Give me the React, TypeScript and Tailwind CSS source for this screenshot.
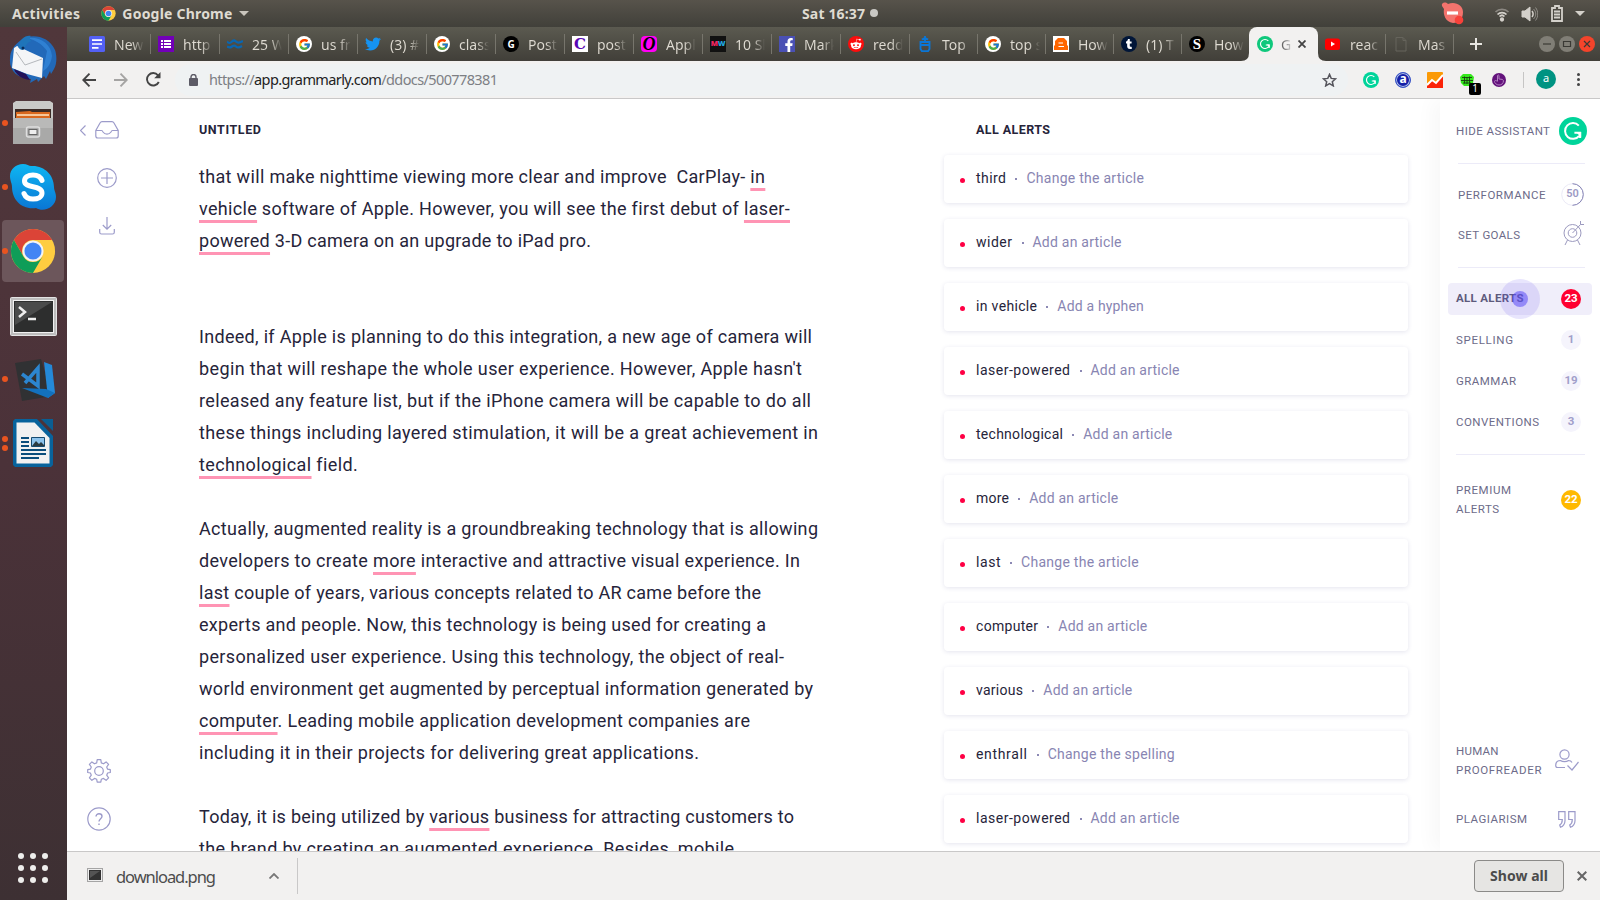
import { useLayoutEffect, useRef, type ReactNode } from "react";
import { FaTwitter, FaRedditAlien, FaFacebookF, FaTumblr } from "react-icons/fa";
import { FcGoogle } from "react-icons/fc";

/* Tracks its text out (or in) so that it fills the given width. */
function Fit({ w, className = "", children }: { w: number; className?: string; children: ReactNode }) {
  const ref = useRef<HTMLSpanElement>(null);
  useLayoutEffect(() => {
    const el = ref.current;
    if (!el) return;
    el.style.letterSpacing = "0px";
    const n = (el.textContent ?? "").length;
    el.style.letterSpacing = `${(w - el.getBoundingClientRect().width) / Math.max(1, n - 1)}px`;
  }, [w]);
  return (
    <span ref={ref} className={`inline-block shrink-0 whitespace-pre ${className}`}>
      {children}
    </span>
  );
}

function GrammarlyLogo({ size, color = "#00d49a" }: { size: number; color?: string }) {
  return (
    <svg width={size} height={size} viewBox="0 0 28 28" className="shrink-0">
      <circle cx="14" cy="14" r="14" fill={color} />
      <path d="M19.800 8.600A7.900 7.900 0 1 0 20.200 18.800M15.400 15.700h5.700v5.400" fill="none" stroke="#fff" strokeWidth="2" />
      <path d="M17 15h5.200v5.600z" fill="#fff" />
    </svg>
  );
}

function ChromeLogo({ size }: { size: number }) {
  return (
    <svg width={size} height={size} viewBox="0 0 48 48" className="shrink-0">
      <circle cx="24" cy="24" r="23" fill="#ffcd40" />
      <path d="M4.100 12.500A23 23 0 0 1 43.900 12.500H24A11.500 11.500 0 0 0 14 29.700z" fill="#db4437" />
      <path d="M4.100 12.500A23 23 0 0 0 24 47L34 29.700A11.500 11.500 0 0 1 14 29.700z" fill="#0f9d58" />
      <circle cx="24" cy="24" r="11" fill="#f4f4f4" />
      <circle cx="24" cy="24" r="8.900" fill="#4285f4" />
    </svg>
  );
}

const disc = "flex size-4 shrink-0 items-center justify-center overflow-hidden rounded-full";
const sq = "flex size-4 shrink-0 items-center justify-center";

const google = (
  <span className={`${disc} bg-white`}>
    <FcGoogle size={13} />
  </span>
);

const tabs: { t: string; icon: ReactNode; narrow?: boolean }[] = [
  {
    t: "New",
    icon: (
      <svg width="16" height="16" viewBox="0 0 16 16"><rect width="16" height="16" rx="1.500" fill="#5360f5" /><path d="M3 4.200h10M3 8h10M3 11.800h6.500" stroke="#fff" strokeWidth="1.700" /></svg>
    ),
  },
  {
    t: "http",
    icon: (
      <svg width="16" height="16" viewBox="0 0 16 16"><rect width="16" height="16" fill="#7200b8" /><path d="M6 5h7M6 8h7M6 11h7M3 5h2M3 8h2M3 11h2" stroke="#fff" strokeWidth="1.800" /></svg>
    ),
  },
  {
    t: "25 W",
    icon: (
      <svg width="16" height="16" viewBox="0 0 16 16" fill="none" stroke="#0a66b0" strokeWidth="2.200"><path d="M0 5.500c2 2 3 2 5 0s3-1 4 0 3 2 7-.5M0 10.500c2 1.500 3 1.500 5 0s3-1 4 0 3 1.500 6-.5" /></svg>
    ),
  },
  { t: "us fr", icon: google },
  { t: "(3) #", icon: <FaTwitter size={16} color="#1593f2" /> },
  { t: "class", icon: google },
  { t: "Post", icon: <span className={`${disc} bg-black text-[10px] font-bold text-white`}>G</span> },
  { t: "post", icon: <span className={`${sq} bg-white font-['DejaVu_Serif'] text-[15px] leading-none font-bold text-[#5a06b5]`}>C</span> },
  { t: "Appl", icon: <span className={`${sq} rounded-sm bg-[#ff00f5] font-['Liberation_Serif'] text-[18px] leading-none font-bold text-black italic`}>O</span> },
  { t: "10 Sl", icon: <span className={`${sq} bg-[#111] text-[7.500px] font-black tracking-tighter text-[#f0255f]`}>M<b className="text-[#21a7e0]">W</b></span> },
  { t: "Mark", icon: <span className={`${sq} items-end bg-[#4a50b4] pl-1`}><FaFacebookF size={14} color="#fff" /></span> },
  { t: "redd", icon: <span className={`${disc} bg-[#fb0d0d]`}><FaRedditAlien size={12} color="#fff" /></span> },
  {
    t: "Top",
    narrow: true,
    icon: (
      <svg width="16" height="16" viewBox="0 0 16 16" fill="none" stroke="#0b76d6" strokeWidth="1.900"><path d="M3.500 6h9v7l-1.500 2.200h-6L3.500 13zM3.500 9h9M8 6V0M4.800 3.500L8 2l3.200 1.500" /></svg>
    ),
  },
  { t: "top s", narrow: true, icon: google },
  {
    t: "How",
    narrow: true,
    icon: (
      <svg width="16" height="16" viewBox="0 0 16 16"><rect width="16" height="16" fill="#fff" /><path d="M2 5l3-3h6l3 3v4l1 1v4H1v-4l1-1z" fill="#f60" /><path d="M5.500 7h4.500M5.500 10.500h5.500" stroke="#fff" strokeWidth="1.200" /></svg>
    ),
  },
  { t: "(1) T", narrow: true, icon: <span className={`${disc} bg-[#011638]`}><FaTumblr size={10} color="#fff" /></span> },
  { t: "How", narrow: true, icon: <span className={`${disc} bg-black font-['Liberation_Serif'] text-[15px] leading-none font-bold text-white`}>S</span> },
];

function Tab({ t, icon, narrow, sep = true }: { t: string; icon: ReactNode; narrow?: boolean; sep?: boolean }) {
  return (
    <div className={`flex h-5 shrink-0 items-center pl-[7px] ${narrow ? "w-[68px]" : "w-[69px]"} ${sep ? "border-r border-[#77756c]" : ""}`}>
      <span className="flex w-4 shrink-0 justify-center">{icon}</span>
      <span className="ml-[9px] w-[30px] shrink-0 bg-linear-to-r from-[#dfdbd2] from-60% to-transparent bg-clip-text text-[14px] whitespace-nowrap text-transparent">{t}</span>
    </div>
  );
}

function TopBar() {
  return (
    <div className="flex h-[27px] shrink-0 items-center bg-linear-to-b from-[#57534b] to-[#41403a] text-[14px] font-bold text-[#dfdbd2]">
      <div className="flex w-[802px] items-center pl-3">
        <Fit w={68}>Activities</Fit>
        <span className="ml-[21px]"><ChromeLogo size={15} /></span>
        <Fit w={110} className="ml-[6px]">Google Chrome</Fit>
        <span className="ml-1.5 h-0 w-0 border-x-[5px] border-t-[5px] border-x-transparent border-t-[#c9c5bd]" />
      </div>
      <Fit w={63} className="-mt-px">Sat 16:37</Fit>
      <span className="-mt-px ml-[5px] size-2 rounded-full bg-[#c9c8c4]" />
      <svg className="mt-[-1px] ml-auto" width="24" height="24" viewBox="0 0 24 24">
        <path d="M1 5C0 2 4 0 7 3c7-3 15 1 15 8 0 7-4 11-10 11C4 21 2 13 3 8z" fill="#f3736d" />
        <path d="M6 12h11" stroke="#fff" strokeWidth="3.200" />
        <circle cx="18" cy="19" r="4.300" fill="#f8413a" />
      </svg>
      <svg className="ml-[29px]" width="16" height="16" viewBox="0 0 16 16" fill="none" stroke="#d4d1cb" strokeWidth="1.700">
        <path d="M1.500 6C5 2.500 11 2.500 14.500 6" opacity=".45" />
        <path d="M3.500 8.500C6 6 10 6 12.500 8.500M5.500 10.500C7 9 9 9 10.500 10.500" />
        <circle cx="8" cy="13.500" r="1.300" fill="#d4d1cb" />
      </svg>
      <svg className="ml-[11px]" width="17" height="16" viewBox="0 0 17 16" fill="none" stroke="#d4d1cb">
        <path d="M1 5h3l5-4v14l-5-4H1z" fill="#d4d1cb" />
        <path d="M11 5c1.500 2 1.500 4 0 6" strokeWidth="1.500" />
        <path d="M12.500 3c3 3 3 7 0 10M14.500 1.500c3 4 3 9 0 13" opacity=".5" />
      </svg>
      <svg className="ml-[13px]" width="12" height="17" viewBox="0 0 12 17" fill="none" stroke="#d4d1cb" strokeWidth="1.800">
        <path d="M1 3h3V1h4v2h3v13H1zM3 6.500h6M3 9.500h6M3 12.500h6" />
      </svg>
      <span className="mr-[15px] ml-[12px] h-0 w-0 border-x-[5px] border-t-[5px] border-x-transparent border-t-[#d4d1cb]" />
    </div>
  );
}

function Dots({ n }: { n: number }) {
  return (
    <span className="flex w-[10px] flex-col items-center gap-[3px]">
      {Array.from({ length: n }, (_, i) => <i key={i} className="size-1.5 rounded-full bg-[#e95420]" />)}
    </span>
  );
}

function Launcher({ n = 1, active = false, children }: { n?: number; active?: boolean; children: ReactNode }) {
  return (
    <div className={`mb-[2px] ml-[2px] flex h-[62px] w-[62px] shrink-0 items-center rounded-sm ${active ? "bg-[#6c565b]" : ""}`}>
      <span className="ml-[-2px]"><Dots n={n} /></span>
      <span className="-ml-px flex w-[48px] items-center justify-center">{children}</span>
    </div>
  );
}

function Dock() {
  return (
    <div className="flex w-[67px] shrink-0 flex-col bg-linear-to-b from-[#50373b] via-[#4b3239] to-[#3d3033] pt-[1px]">
      <Launcher n={0}>
        <svg width="48" height="48" viewBox="0 0 48 48">
          <path d="M12 5C22-2 40 1 46 15c2 6 2 14-1 19l-3 5-1-3-4 8-2-3-6 6-1-3-7 4 1-4C8 44 0 35 1 24c0-8 4-14 11-19z" fill="#2269b9" />
          <path d="M18 3c12-2 24 5 25 18-1 8-5 13-9 15l4-20C34 10 27 5 18 3z" fill="#2f80d3" />
          <path d="M5 13l3-2 26 12-1 20-15-4L3 33z" fill="#f4f5f7" />
          <path d="M9 12C11 4 16 0 22 1c-3 2 0 6 5 9-6-2-9-1-12 4-1 2-4 1-6-2z" fill="#1f75ba" />
          <path d="M24 6c8 2 13 8 12 18L30 19 20 16l-4-3c1-4 4-7 8-7z" fill="#2269b9" />
          <path d="M7 17l9 13 17-6" fill="none" stroke="#adb0b4" strokeWidth=".9" />
          <path d="M5 34l12 5 4 6C13 44 7 40 5 34z" fill="#241259" />
          <circle cx="14" cy="13" r="1.500" fill="#0b2c5a" />
        </svg>
      </Launcher>
      <Launcher>
        <svg width="44" height="46" viewBox="0 0 44 46">
          <path d="M2 3l3-2h34l3 2v38H2z" fill="#c9c9c7" />
          <path d="M4 9h36v10H4z" fill="#3b2b26" />
          <path d="M5 12l14-1 2 1h18v7H5z" fill="#d9681e" />
          <path d="M6 15h32" stroke="#ffe7c4" strokeWidth="1.500" />
          <path d="M2 18h40v26H2z" fill="#a9a9a8" />
          <path d="M2 18h40v10H2z" fill="#b9b9b8" />
          <rect x="15.500" y="27" width="13" height="10" rx="2" fill="#aaa" stroke="#dedede" strokeWidth="1.500" />
          <rect x="18" y="29.500" width="8" height="5" fill="#eee" stroke="#666" />
        </svg>
      </Launcher>
      <Launcher>
        <svg width="48" height="48" viewBox="0 0 48 48">
          <defs><linearGradient id="sk" x1="0" y1="0" x2="0" y2="1"><stop offset="0" stopColor="#0eb6f2" /><stop offset="1" stopColor="#0a76d4" /></linearGradient></defs>
          <path d="M14 1c4 0 6 2 8 2 13-1 23 9 23 21 0 4 2 5 2 10 0 10-12 16-20 11C13 47 3 37 3 24 3 20 1 18 1 13 1 6 7 1 14 1z" fill="url(#sk)" />
          <path d="M33 17.500c-1.500-4-5-5.500-9-5.500-5 0-8.500 2.300-8.500 6 0 8 17.500 3.500 17.500 12 0 4-4 6-9 6-4 0-7.500-1.500-9-5.500" fill="none" stroke="#fff" strokeWidth="5" strokeLinecap="round" />
        </svg>
      </Launcher>
      <Launcher active><ChromeLogo size={46} /></Launcher>
      <Launcher n={0}>
        <svg className="mt-[3px]" width="47" height="40" viewBox="0 0 47 40">
          <rect x=".5" y=".5" width="46" height="38" rx="1" fill="#bdbdbd" stroke="#e3e3e3" />
          <rect x="3.500" y="3.500" width="40" height="32" fill="#2d2e2e" stroke="#f1f1f1" />
          <path d="M5 5h37L5 28z" fill="#4a4b4b" />
          <path d="M9 10l6 5-6 5M18 22h8" fill="none" stroke="#eee" strokeWidth="2.500" />
        </svg>
      </Launcher>
      <Launcher>
        <svg width="44" height="44" viewBox="0 0 44 44" className="mt-px ml-[3px]">
          <path d="M2 5l26-4 11 37L9 43z" fill="#303133" />
          <path d="M31 4l8 3 3 28-7 5z" fill="#2489d8" />
          <path d="M9 30l24 1 9 4-7 5z" fill="#1371bd" />
          <path d="M9 16l16 12V10L12 25" fill="none" stroke="#2c86d0" strokeWidth="3.500" />
        </svg>
      </Launcher>
      <Launcher n={2}>
        <svg width="41" height="48" viewBox="0 0 41 48">
          <path d="M2 0h22l16 17v29l-2 2H2l-2-2V2z" fill="#08639c" />
          <path d="M3.500 3.500h18L36.500 19v25.500h-33z" fill="#f1f1f1" />
          <path d="M28 0h12v12z" fill="#0a5e92" />
          <path d="M8 19h8M8 23h8M8 27h8M8 31h25M8 35h25M8 39h18" stroke="#0a4d7b" strokeWidth="2" />
          <path d="M18.500 18.500h13v9h-13z" fill="#8dc3ec" stroke="#174b70" />
          <path d="M19 27l4-5 3 3 2-2 4 4z" fill="#2b3b41" />
        </svg>
      </Launcher>
      <div className="mt-auto mb-[17px] ml-[18px] grid w-[30px] grid-cols-3 gap-1.5">
        {Array.from({ length: 9 }, (_, i) => <i key={i} className="size-1.5 rounded-full bg-[#eeeeec]" />)}
      </div>
    </div>
  );
}

function WinButton({ close = false, children }: { close?: boolean; children: ReactNode }) {
  return (
    <span className={`flex size-4 items-center justify-center rounded-full ${close ? "bg-[#f4442b]" : "bg-[#807e76]"}`}>
      <svg width="16" height="16" viewBox="0 0 16 16" fill="none" stroke="#3a3934" strokeWidth="1.200">{children}</svg>
    </span>
  );
}

function TabStrip() {
  return (
    <div className="flex h-[34px] shrink-0 items-center bg-linear-to-b from-[#5b5a50] to-[#413f39] pl-[15px]">
      {tabs.map((tab, i) => <Tab key={i} {...tab} sep={i < tabs.length - 1} />)}
      <div className="relative -ml-px flex h-[34px] w-[69px] shrink-0 items-center rounded-t-lg bg-[#f2f1f0] pl-2">
        <svg className="absolute bottom-0 left-[-8px]" width="85" height="8" viewBox="0 0 85 8" fill="#f2f1f0"><path d="M0 8Q8 8 8 0V8zM85 8Q77 8 77 0V8z" /></svg>
        <GrammarlyLogo size={16} color="#0fc87c" />
        <span className="ml-2 w-[10px] bg-linear-to-r from-[#555] to-[#ccc] bg-clip-text text-[14px] text-transparent">G</span>
        <svg className="ml-[7px]" width="8" height="8" viewBox="0 0 8 8" stroke="#444" strokeWidth="1.800"><path d="M.5 .5l7 7M7.500 .5l-7 7" /></svg>
      </div>
      <Tab t="reac" narrow icon={<svg width="16" height="16" viewBox="0 0 16 16"><rect y="2.500" width="15" height="11.500" rx="2.500" fill="#f00" /><path d="M6 5.500v5l4-2.500z" fill="#fff" /></svg>} />
      <Tab t="Mas" narrow icon={<svg width="16" height="16" viewBox="0 0 16 16" fill="none" stroke="#66645c"><path d="M3 1.500h7l3 3V15H3zM10 1.500v3h3" /></svg>} />
      <svg className="ml-[16px]" width="12" height="12" viewBox="0 0 12 12" stroke="#e8e6e1" strokeWidth="2"><path d="M6 0v12M0 6h12" /></svg>
      <div className="mr-[5px] ml-auto flex gap-1">
        <WinButton><path d="M4 8h8" /></WinButton>
        <WinButton><path d="M4.500 5.500h7v5h-7z" /></WinButton>
        <WinButton close><path d="M5 5l6 6M11 5l-6 6" /></WinButton>
      </div>
    </div>
  );
}

function Toolbar() {
  return (
    <div className="flex h-[38px] shrink-0 items-center border-b border-[#c9c8c8] bg-[#f2f1f0] pl-[15px]">
      <svg width="14" height="14" viewBox="0 0 14 14" fill="none" stroke="#444" strokeWidth="1.900"><path d="M14 7H1.500M7.500 .7L1.300 7l6.200 6.300" /></svg>
      <svg className="ml-[18px]" width="14" height="14" viewBox="0 0 14 14" fill="none" stroke="#a5a4a3" strokeWidth="1.900"><path d="M0 7h12.500M6.500 .7L12.700 7l-6.200 6.300" /></svg>
      <svg className="ml-[18px]" width="15" height="15" viewBox="0 0 15 15" fill="none" stroke="#444" strokeWidth="1.900"><path d="M12.800 10A6.200 6.200 0 1 1 12 3.300l1.500 1.700" /><path d="M14.500 0v6.300H8.200z" fill="#444" stroke="none" /></svg>
      <div className="ml-[14px] flex h-8 w-[1173px] items-center rounded-full bg-[#eff2f3] pl-[14px] text-[14.500px]">
        <svg width="9" height="12" viewBox="0 0 9 12"><rect y="4" width="9" height="8" rx="1" fill="#5c5b66" /><path d="M2 5V3a2.500 2.500 0 0 1 5 0v2" fill="none" stroke="#5c5b66" strokeWidth="1.400" /></svg>
        <Fit w={289} className="ml-[11px] text-[#7d7f84]">
          https://<span className="text-[#222]">app.grammarly.com</span>/ddocs/500778381
        </Fit>
        <svg className="mr-[11px] ml-auto" width="15" height="14" viewBox="0 0 15 14" fill="none" stroke="#55555c" strokeWidth="1.500"><path d="M7.500 1.400l1.700 4 4.400.4-3.300 2.900 1 4.200-3.800-2.200-3.800 2.200 1-4.200L1.400 5.800l4.400-.4z" /></svg>
      </div>
      <span className="ml-[15px]"><GrammarlyLogo size={16} /></span>
      <span className="ml-4 flex size-4 items-center justify-center rounded-full border border-[#3b57c9] bg-[#1520a8] text-[12px] leading-none font-bold text-white ring-1 ring-[#b4c4e8] ring-inset"><span className="-mt-0.5">a</span></span>
      <svg className="ml-4" width="16" height="16" viewBox="0 0 16 16"><rect width="16" height="16" rx="1" fill="#fb9a06" /><path d="M0 14l5-6 4 3 7-8v13H0z" fill="#fb2308" /><path d="M0 13l5-5 4 3 7-8" fill="none" stroke="#fff" strokeWidth="2" /></svg>
      <span className="relative ml-[17px]">
        <svg width="14" height="14" viewBox="0 0 14 14"><path d="M3 1h8l3 3-1 6-3 3H4l-3-3-1-6z" fill="#35e81c" /><path d="M2 4.500h10M1 7.500h12M3 10h8M4.500 3.500v7M7 4v7M9.500 3.500v7" stroke="#173d11" strokeWidth=".9" /></svg>
        <span className="absolute top-[10px] left-[9px] flex size-3 items-center justify-center rounded-[2px] bg-black text-[10px] text-white">1</span>
      </span>
      <svg className="ml-[18px]" width="14" height="14" viewBox="0 0 14 14"><circle cx="7" cy="7" r="7" fill="#64137c" /><path d="M5.500 8V2.500q1-1 1.500 0V6q4 0 4.500 1.500c0 3-2 4.500-4.500 4.500s-4.500-2-4.500-3.500 2-1 3 0" fill="none" stroke="#b17fc0" /></svg>
      <span className="ml-[17px] h-4 w-px bg-[#c6c5c4]" />
      <span className="-mt-0.5 ml-[12px] flex size-5 items-center justify-center rounded-full bg-[#009382] text-[11px] text-white">a</span>
      <span className="ml-[21px] flex flex-col gap-0.5">{[0, 1, 2].map((i) => <i key={i} className="size-[3px] rounded-full bg-[#444]" />)}</span>
    </div>
  );
}

const U = ({ children }: { children: ReactNode }) => (
  <span className="underline decoration-[#ff94b4] decoration-[3px] underline-offset-[5px] [text-decoration-skip-ink:none]">{children}</span>
);

const lines: [number, ReactNode][] = [
  [566, <>that will make nighttime viewing more clear and improve{"  "}CarPlay- <U>in</U></>],
  [590, <><U>vehicle</U> software of Apple. However, you will see the first debut of <U>laser-</U></>],
  [392, <><U>powered</U> 3-D camera on an upgrade to iPad pro.</>],
  [0, null],
  [0, null],
  [613, "Indeed, if Apple is planning to do this integration, a new age of camera will"],
  [603, "begin that will reshape the whole user experience. However, Apple hasn't"],
  [612, "released any feature list, but if the iPhone camera will be capable to do all"],
  [619, "these things including layered stimulation, it will be a great achievement in"],
  [158, <><U>technological</U> field.</>],
  [0, null],
  [619, "Actually, augmented reality is a groundbreaking technology that is allowing"],
  [601, <>developers to create <U>more</U> interactive and attractive visual experience. In</>],
  [562, <><U>last</U> couple of years, various concepts related to AR came before the</>],
  [567, "experts and people. Now, this technology is being used for creating a"],
  [585, "personalized user experience. Using this technology, the object of real-"],
  [614, "world environment get augmented by perceptual information generated by"],
  [551, <><U>computer</U>. Leading mobile application development companies are</>],
  [500, "including it in their projects for delivering great applications."],
  [0, null],
  [595, <>Today, it is being utilized by <U>various</U> business for attracting customers to</>],
  [535, "the brand by creating an augmented experience. Besides, mobile"],
];

const alerts: [string, number, string, number][] = [
  ["third", 30, "Change the article", 117.5],
  ["wider", 36, "Add an article", 89],
  ["in vehicle", 61, "Add a hyphen", 86.5],
  ["laser-powered", 94, "Add an article", 89],
  ["technological", 87, "Add an article", 89],
  ["more", 33, "Add an article", 89],
  ["last", 24.5, "Change the article", 117.5],
  ["computer", 62, "Add an article", 89],
  ["various", 47, "Add an article", 89],
  ["enthrall", 51, "Change the spelling", 127],
  ["laser-powered", 94, "Add an article", 89],
];

function ToolRail() {
  return (
    <div className="flex w-[132px] shrink-0 flex-col text-[#9c9bca]">
      <div className="mt-[22px] ml-[13px] flex items-center gap-[9px]">
        <svg width="6" height="11" viewBox="0 0 6 11" fill="none" stroke="currentColor" strokeWidth="1.200"><path d="M5.500 .5l-5 5 5 5" /></svg>
        <svg width="24" height="18" viewBox="0 0 24 18" fill="none" stroke="currentColor" strokeWidth="1.200"><path d="M.8 9.500L5 2q.8-1.300 2-1.300h10q1.200 0 2 1.300l4.200 7.500v5.500q0 2-2 2H2.800q-2 0-2-2zM1 9.500h5.500q1 0 1.500 1.500 1.500 2.200 4 2.200t4-2.200q.5-1.500 1.500-1.500H23" /></svg>
      </div>
      <svg className="mt-[29px] ml-[30px]" width="20" height="20" viewBox="0 0 20 20" fill="none" stroke="currentColor" strokeWidth="1.200"><circle cx="10" cy="10" r="9.300" /><path d="M10 4v12M4 10h12" /></svg>
      <svg className="mt-[29px] ml-[32px]" width="16" height="18" viewBox="0 0 16 18" fill="none" stroke="currentColor" strokeWidth="1.200"><path d="M8 0v12M3.800 8L8 12.200 12.200 8M.7 12v3.200q0 1.800 1.800 1.800h11q1.800 0 1.800-1.800V12" /></svg>
      <svg className="mt-auto ml-[20px]" width="24" height="24" viewBox="0 0 24 24" fill="none" stroke="currentColor" strokeWidth="1.200">
        <path d="M10.200 .7h3.600l.5 3.200 2.200.9 2.600-1.900 2.500 2.500-1.900 2.600.9 2.200 2.700.5v2.800l-2.700.5-.9 2.200 1.900 2.600-2.500 2.500-2.600-1.900-2.200.9-.5 2.900h-3.600l-.5-2.900-2.200-.9-2.600 1.900-2.500-2.500 1.900-2.600-.9-2.200-2.700-.5v-2.800l2.700-.5.9-2.200-1.900-2.600 2.500-2.500 2.600 1.900 2.200-.9z" strokeLinejoin="round" /><circle cx="12" cy="12" r="4.300" />
      </svg>
      <svg className="mt-6 mb-[20px] ml-[20px]" width="24" height="24" viewBox="0 0 24 24" fill="none" stroke="currentColor" strokeWidth="1.200"><circle cx="12" cy="12" r="11.200" /><path d="M9 9.500C9 5.800 15 6 15 9.300c0 2.400-3 2.400-3 5.200M12 16.500v1.500" strokeWidth="1.400" /></svg>
    </div>
  );
}

function Editor() {
  return (
    <div className="w-[745px] shrink-0 text-[#26243a]">
      <Fit w={62} className="mt-[21px] h-[20px] text-[12.500px] leading-[20px] font-bold">UNTITLED</Fit>
      <div className="mt-[20px] text-[18px]">
        {lines.map(([w, text], i) => (
          <div key={i} className="h-8 leading-8">{w > 0 && <Fit w={w}>{text}</Fit>}</div>
        ))}
      </div>
    </div>
  );
}

function AlertList() {
  return (
    <div className="flex w-[464px] shrink-0 flex-col">
      <Fit w={74} className="mt-[21px] ml-8 h-[20px] self-start text-[12.500px] leading-[20px] font-bold text-[#26243a]">ALL ALERTS</Fit>
      <div className="mt-[15px] flex flex-col gap-4">
        {alerts.map(([word, ww, tip, tw], i) => (
          <div key={i} className="flex h-12 shrink-0 items-center rounded bg-white pl-4 text-[14px] shadow-[0_1px_4px_rgba(90,85,150,0.16)]">
            <i className="mt-[3px] mr-[11px] size-[5px] rounded-full bg-[#ff0044]" />
            <Fit w={ww} className="-mt-px text-[#26243a]">{word}</Fit>
            <i className="mr-[9px] ml-[9px] size-[2px] bg-[#8c89b4]" />
            <Fit w={tw} className="-mt-px text-[#8885b2]">{tip}</Fit>
          </div>
        ))}
      </div>
    </div>
  );
}

const label = "text-[11.500px] leading-[19px] text-[#6d6b89]";
const badge = "mr-[11px] ml-auto flex size-5 items-center justify-center rounded-full text-[11.500px] font-bold";

function Assistant() {
  return (
    <div className="flex w-[160px] shrink-0 flex-col bg-white shadow-[-8px_0_18px_rgba(0,0,0,0.03)]">
      <div className="flex h-16 items-center pl-4">
        <Fit w={94} className={label}>HIDE ASSISTANT</Fit>
        <span className="ml-[9px]"><GrammarlyLogo size={28} /></span>
      </div>
      <div className="mr-[15px] ml-[18px] h-px bg-[#ecebf8]" />
      <div className="mt-[11px] flex h-10 items-center pl-[18px]">
        <Fit w={87.5} className={label}>PERFORMANCE</Fit>
        <span className="-mt-0.5 mr-4 ml-auto grid place-items-center">
          <svg className="col-start-1 row-start-1" width="23" height="23" viewBox="0 0 23 23" fill="none" strokeWidth="1"><circle cx="11.500" cy="11.500" r="10.800" stroke="#ebeaf6" /><path d="M11.500 .7a10.800 10.800 0 0 1 0 21.600" stroke="#8583b4" /></svg>
          <b className="col-start-1 row-start-1 text-[11px] font-semibold text-[#9c9ac4]">50</b>
        </span>
      </div>
      <div className="flex h-10 items-center pl-[18px]">
        <Fit w={62} className={label}>SET GOALS</Fit>
        <svg className="-mt-1 mr-[15px] ml-auto" width="22" height="26" viewBox="0 0 22 26" fill="none" stroke="#9c9abf" strokeWidth="1"><circle cx="9.500" cy="13" r="8.500" /><circle cx="9.500" cy="13" r="4.300" /><path d="M9.500 13l8-8.500V1M17.500 4.500H21M4.500 20l-2.500 5M14.500 20l2.500 5" /></svg>
      </div>
      <div className="mt-[12px] mr-[15px] ml-[18px] h-px bg-[#ecebf8]" />
      <div className="relative mx-2 mt-[15px] flex h-8 items-center rounded bg-[#f0eefa] pl-2">
        <Fit w={67.5} className="text-[11.500px] font-bold text-[#5d5a7c]">ALL ALERTS</Fit>
        <span className="mr-[11px] ml-auto flex size-5 items-center justify-center rounded-full bg-[#ff0030] text-[11.500px] font-bold text-white">23</span>
        <span className="absolute top-[-4px] left-[52px] flex size-10 items-center justify-center rounded-full bg-[#6552f0]/15"><i className="size-4 rounded-full bg-[#5a4af5]/55" /></span>
      </div>
      {([["SPELLING", 57, "1"], ["GRAMMAR", 60, "19"], ["CONVENTIONS", 83, "3"]] as [string, number, string][]).map(([t, w, n]) => (
        <div key={t} className="mx-2 mt-[9px] flex h-8 items-center pl-2">
          <Fit w={w} className={label}>{t}</Fit>
          <span className={`${badge} bg-[#f5f4fc] text-[#a19fca]`}>{n}</span>
        </div>
      ))}
      <div className="mt-[16px] mr-[15px] ml-4 h-px bg-[#ecebf8]" />
      <div className="mx-2 mt-[26px] flex items-center pl-2">
        <div className="flex flex-col items-start">
          <Fit w={55} className={label}>PREMIUM</Fit>
          <Fit w={43} className={label}>ALERTS</Fit>
        </div>
        <span className={`${badge} bg-[#ffb900] text-white`}>22</span>
      </div>
      <div className="mt-auto flex items-center pl-4">
        <div className="flex flex-col items-start">
          <Fit w={42.5} className={label}>HUMAN</Fit>
          <Fit w={85.5} className={label}>PROOFREADER</Fit>
        </div>
        <svg className="-mt-0.5 ml-[13px]" width="24" height="22" viewBox="0 0 24 22" fill="none" stroke="#9c9bca" strokeWidth="1.200"><circle cx="9.500" cy="5.500" r="4.600" /><path d="M10 18.500H2.500Q.7 18.500.7 16.500C.7 13 3 11.500 5.500 11.500c2 1.500 6 1.500 8 0q2.500 0 3.500 2M12.500 16.500l4.500 4.500 6.500-8" /></svg>
      </div>
      <div className="mt-[23px] mb-4 flex h-8 items-center pl-4">
        <Fit w={71} className={label}>PLAGIARISM</Fit>
        <svg className="ml-[31px]" width="18" height="17" viewBox="0 0 18 17" fill="none" stroke="#9c9bca" strokeWidth="1.200"><path d="M.7 .7H7v9c0 3-2 6-4.500 6.500L1.700 14C3.500 13 4.300 11 4.300 8.500H.7zM10.700 .7H17v9c0 3-2 6-4.500 6.500l-.8-2.200c1.800-1 2.600-3 2.600-5.500h-3.600z" /></svg>
      </div>
    </div>
  );
}

function DownloadBar() {
  return (
    <div className="flex h-[49px] shrink-0 items-center border-t border-[#c9c8c8] bg-[#f2f1f0] pb-px pl-5">
      <svg className="-mt-0.5" width="16" height="14" viewBox="0 0 16 14"><rect x=".5" y=".5" width="15" height="13" fill="#eee" stroke="#a5a5a5" /><rect x="2" y="2" width="12" height="10" fill="#333" /><path d="M3 3h10L3 10z" fill="#555" /></svg>
      <Fit w={100} className="mt-[3px] ml-[13px] text-[16.500px] text-[#4c4c4c]">download.png</Fit>
      <svg className="mt-px ml-[54px]" width="10" height="6" viewBox="0 0 10 6" fill="none" stroke="#777" strokeWidth="1.800"><path d="M.5 5.500L5 1l4.500 4.500" /></svg>
      <span className="ml-[18px] h-9 w-px bg-[#c9c8c8]" />
      <div className="ml-auto flex h-8 w-[90px] items-center justify-center rounded border border-[#8b8a88] bg-[#e6e5e3]">
        <Fit w={58} className="text-[14px] font-bold text-[#4c4c4c]">Show all</Fit>
      </div>
      <svg className="mr-[13px] ml-[13px]" width="10" height="10" viewBox="0 0 10 10" stroke="#666" strokeWidth="2"><path d="M.7 .7l8.600 8.600M9.300 .7L.7 9.300" /></svg>
    </div>
  );
}

export default function App() {
  return (
    <div className="flex h-[900px] w-[1600px] flex-col overflow-hidden bg-white font-['Noto_Sans',sans-serif]">
      <TopBar />
      <div className="flex min-h-0 flex-1">
        <Dock />
        <div className="flex min-w-0 flex-1 flex-col">
          <TabStrip />
          <Toolbar />
          <div className="flex min-h-0 flex-1 overflow-hidden font-[Roboto,sans-serif]">
            <ToolRail />
            <Editor />
            <AlertList />
            <div className="flex-1" />
            <Assistant />
          </div>
          <DownloadBar />
        </div>
      </div>
    </div>
  );
}
